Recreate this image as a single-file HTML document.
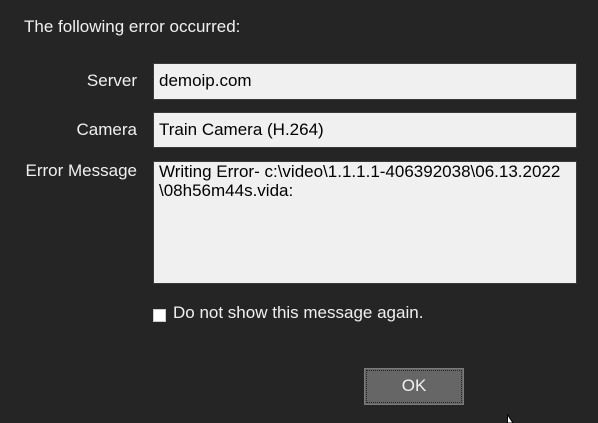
<!DOCTYPE html>
<html><head><style>
body{margin:0;width:598px;height:423px;background:#252525;font-family:"Liberation Sans",Arial,sans-serif;font-size:17px;color:#f0f0f0;position:relative;overflow:hidden}
.a{position:absolute;white-space:nowrap}
.lbl{text-align:right;width:137px;left:0}
.box{position:absolute;left:153px;width:424px;background:#f0f0f0;border:1px solid #3a3a3a;box-sizing:border-box;color:#000;padding:5px 0 0 5px;line-height:19px}
</style></head><body>
<div class="a" style="left:24px;top:17px">The following error occurred:</div>
<div class="a lbl" style="top:71px">Server</div>
<div class="box" style="top:63px;height:37px;padding-top:7px">demoip.com</div>
<div class="a lbl" style="top:120px">Camera</div>
<div class="box" style="top:112px;height:36px;padding-top:7px">Train Camera (H.264)</div>
<div class="a lbl" style="top:161px">Error Message</div>
<div class="box" style="top:161px;height:123px;padding-top:0px">Writing Error- c:\video\1.1.1.1-406392038\06.13.2022<br>\08h56m44s.vida:</div>
<div class="a" style="left:153px;top:309px;width:13px;height:13px;background:#fff;border:1px solid #ccc;box-sizing:border-box"></div>
<div class="a" style="left:173px;top:303px">Do not show this message again.</div>
<div class="a" style="left:364px;top:368px;width:100px;height:37px;background:#666;border:1px solid #7a7a7a;box-sizing:border-box;text-align:center;line-height:33px;outline:1px dotted #222;outline-offset:-3px">OK</div>
<svg class="a" style="left:507px;top:414px" width="10" height="9"><path d="M0.5 0.5V9L6 9Z" fill="#fff" stroke="#000"/></svg>
</body></html>
